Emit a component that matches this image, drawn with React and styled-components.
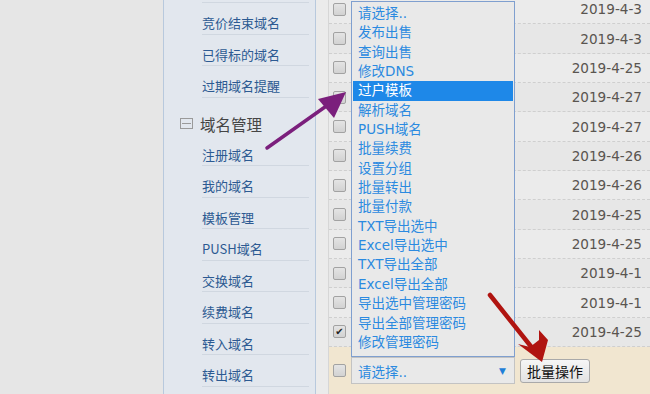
import styled, { createGlobalStyle } from "styled-components";

const GlobalStyle = createGlobalStyle`
  html, body {
    margin: 0;
    padding: 0;
    background: #e6e6e6;
    overflow: hidden;
  }
`;

// the first entry is only the bottom line of an item scrolled out of view
const topItems = ["", "竞价结束域名", "已得标的域名", "过期域名提醒"];
const domainItems = ["注册域名", "我的域名", "模板管理", "PUSH域名", "交换域名", "续费域名", "转入域名", "转出域名"];

const dates = [
  "2019-4-3", "2019-4-3", "2019-4-25", "2019-4-27", "2019-4-27", "2019-4-26",
  "2019-4-26", "2019-4-25", "2019-4-25", "2019-4-1", "2019-4-1", "2019-4-25",
];

const options = [
  "请选择..", "发布出售", "查询出售", "修改DNS", "过户模板", "解析域名", "PUSH域名",
  "批量续费", "设置分组", "批量转出", "批量付款", "TXT导出选中", "Excel导出选中",
  "TXT导出全部", "Excel导出全部", "导出选中管理密码", "导出全部管理密码", "修改管理密码",
];

const App = () => {
  return (
    <Page>
      <GlobalStyle />
      <LeftSpace />
      <Sidebar>
        <MenuList>
          {topItems.map((item, i) => (
            <MenuItem key={i}>{item}</MenuItem>
          ))}
          <GroupTitle>
            <CollapseIcon />
            域名管理
          </GroupTitle>
          {domainItems.map((item) => (
            <MenuItem key={item}>{item}</MenuItem>
          ))}
        </MenuList>
      </Sidebar>
      <Gap />
      <Content>
        <Rows>
          {dates.map((d, i) => (
            <Row key={i} $odd={i % 2 === 0}>
              <Check $checked={i === dates.length - 1}>{i === dates.length - 1 ? "✔" : ""}</Check>
              <DateCell>{d}</DateCell>
            </Row>
          ))}
        </Rows>
        <Footer>
          <Check />
          <SelectBox>
            <span>请选择..</span>
            <Caret>▼</Caret>
          </SelectBox>
          <ActionButton>批量操作</ActionButton>
        </Footer>

        <OptionList>
          {options.map((o) => (
            <OptionItem key={o} $active={o === "过户模板"}>{o}</OptionItem>
          ))}
        </OptionList>
      </Content>

      <Arrows width="650" height="394" viewBox="0 0 650 394">
        <line x1="267" y1="148" x2="332" y2="102" stroke="#7b1f7c" strokeWidth="3.5" strokeLinecap="round" />
        <polygon points="346,92 318,99 334,118" fill="#7b1f7c" />
        <line x1="490" y1="295" x2="533" y2="349" stroke="#b01410" strokeWidth="4.5" strokeLinecap="round" />
        <polygon points="542,362 518,344 530,347 539,340 539,330 548,340" fill="#b01410" />
      </Arrows>
    </Page>
  );
};

export default App;

const Page = styled.div`
  position: relative;
  display: flex;
  width: 650px;
  height: 394px;
  overflow: hidden;
  background: #e6e6e6;
`;

const LeftSpace = styled.div`
  width: 163px;
  flex-shrink: 0;
`;

const Sidebar = styled.div`
  width: 151px;
  flex-shrink: 0;
  background: #e2e7ee;
  border-left: 1px solid #b8c9dd;
  border-right: 1px solid #b8c9dd;
  overflow: hidden;
`;

const MenuList = styled.div`
  margin-top: -28.5px;
`;

const MenuItem = styled.div`
  box-sizing: border-box;
  height: 31.5px;
  margin: 0 6px 0 38px;
  padding-top: 10px;
  line-height: 20px;
  border-bottom: 1px solid #d0d7e0;
  font-family: "Noto Sans CJK SC", sans-serif;
  font-size: 13px;
  color: #2c5a92;
`;

const GroupTitle = styled.div`
  box-sizing: border-box;
  height: 37px;
  padding: 15px 0 0 16px;
  display: flex;
  align-items: center;
  gap: 7px;
  line-height: 20px;
  font-family: "Noto Sans CJK SC", sans-serif;
  font-size: 15.5px;
  color: #454545;
`;

const CollapseIcon = styled.span`
  position: relative;
  display: inline-block;
  box-sizing: border-box;
  width: 13px;
  height: 11px;
  border: 1px solid #9a9a9a;
  &::after {
    content: "";
    position: absolute;
    left: 1px;
    right: 1px;
    top: 4px;
    height: 1px;
    background: #9a9a9a;
  }
`;

const Gap = styled.div`
  width: 12px;
  flex-shrink: 0;
  background: #ebebeb;
`;

const Content = styled.div`
  position: relative;
  flex: 1;
  display: flex;
  flex-direction: column;
  border-left: 1px solid #d6d6d6;
`;

const Rows = styled.div`
  margin-top: -5px;
`;

const Row = styled.div`
  box-sizing: border-box;
  height: 29.35px;
  display: flex;
  align-items: center;
  justify-content: space-between;
  padding: 0 8px 0 4px;
  background: ${(p) => (p.$odd ? "#ebebeb" : "#e7e7e7")};
  border-bottom: 1px dashed #cfcfcf;
`;

const Check = styled.span`
  box-sizing: border-box;
  width: 13px;
  height: 13px;
  flex-shrink: 0;
  border: 1px solid #a2a2a2;
  border-radius: 2px;
  background: linear-gradient(#e4e4e4, #d2d2d2);
  font-size: 10px;
  line-height: 11px;
  text-align: center;
  color: #222;
  font-family: "DejaVu Sans", sans-serif;
`;

const DateCell = styled.span`
  font-family: "DejaVu Sans", sans-serif;
  font-size: 13.6px;
  color: #5a5550;
`;

const Footer = styled.div`
  flex: 1;
  display: flex;
  align-items: center;
  padding-left: 4px;
  background: #f1e6d0;
`;

const SelectBox = styled.div`
  box-sizing: border-box;
  width: 164px;
  height: 27px;
  margin-left: 5px;
  padding: 0 8px 0 6px;
  display: flex;
  align-items: center;
  justify-content: space-between;
  background: #e9e9e9;
  border: 1px solid #c3c3c3;
  font-family: "DejaVu Sans", "Noto Sans CJK SC", sans-serif;
  font-size: 13.5px;
  color: #2b8ae0;
`;

const Caret = styled.span`
  font-size: 9px;
  color: #1f7fd8;
`;

const ActionButton = styled.button`
  margin-left: 5px;
  height: 24px;
  padding: 0 6px;
  border: 1px solid #a9a9a9;
  border-radius: 3px;
  background: linear-gradient(#f6f6f6, #e2e2e2);
  font-family: "Noto Sans CJK SC", sans-serif;
  font-size: 14px;
  color: #111;
  line-height: 20px;
`;

const OptionList = styled.div`
  position: absolute;
  left: 22px;
  top: 1px;
  box-sizing: border-box;
  width: 164px;
  height: 356px;
  padding: 2px 1px 0;
  background: #e9e9e9;
  border: 1px solid #7f9fcf;
`;

const OptionItem = styled.div`
  height: 19.35px;
  line-height: 19.35px;
  padding-left: 5px;
  font-family: "DejaVu Sans", "Noto Sans CJK SC", sans-serif;
  font-size: 13.5px;
  white-space: nowrap;
  color: ${(p) => (p.$active ? "#fff" : "#2b8ae0")};
  background: ${(p) => (p.$active ? "#1e88e8" : "transparent")};
`;

const Arrows = styled.svg`
  position: absolute;
  left: 0;
  top: 0;
  pointer-events: none;
`;
